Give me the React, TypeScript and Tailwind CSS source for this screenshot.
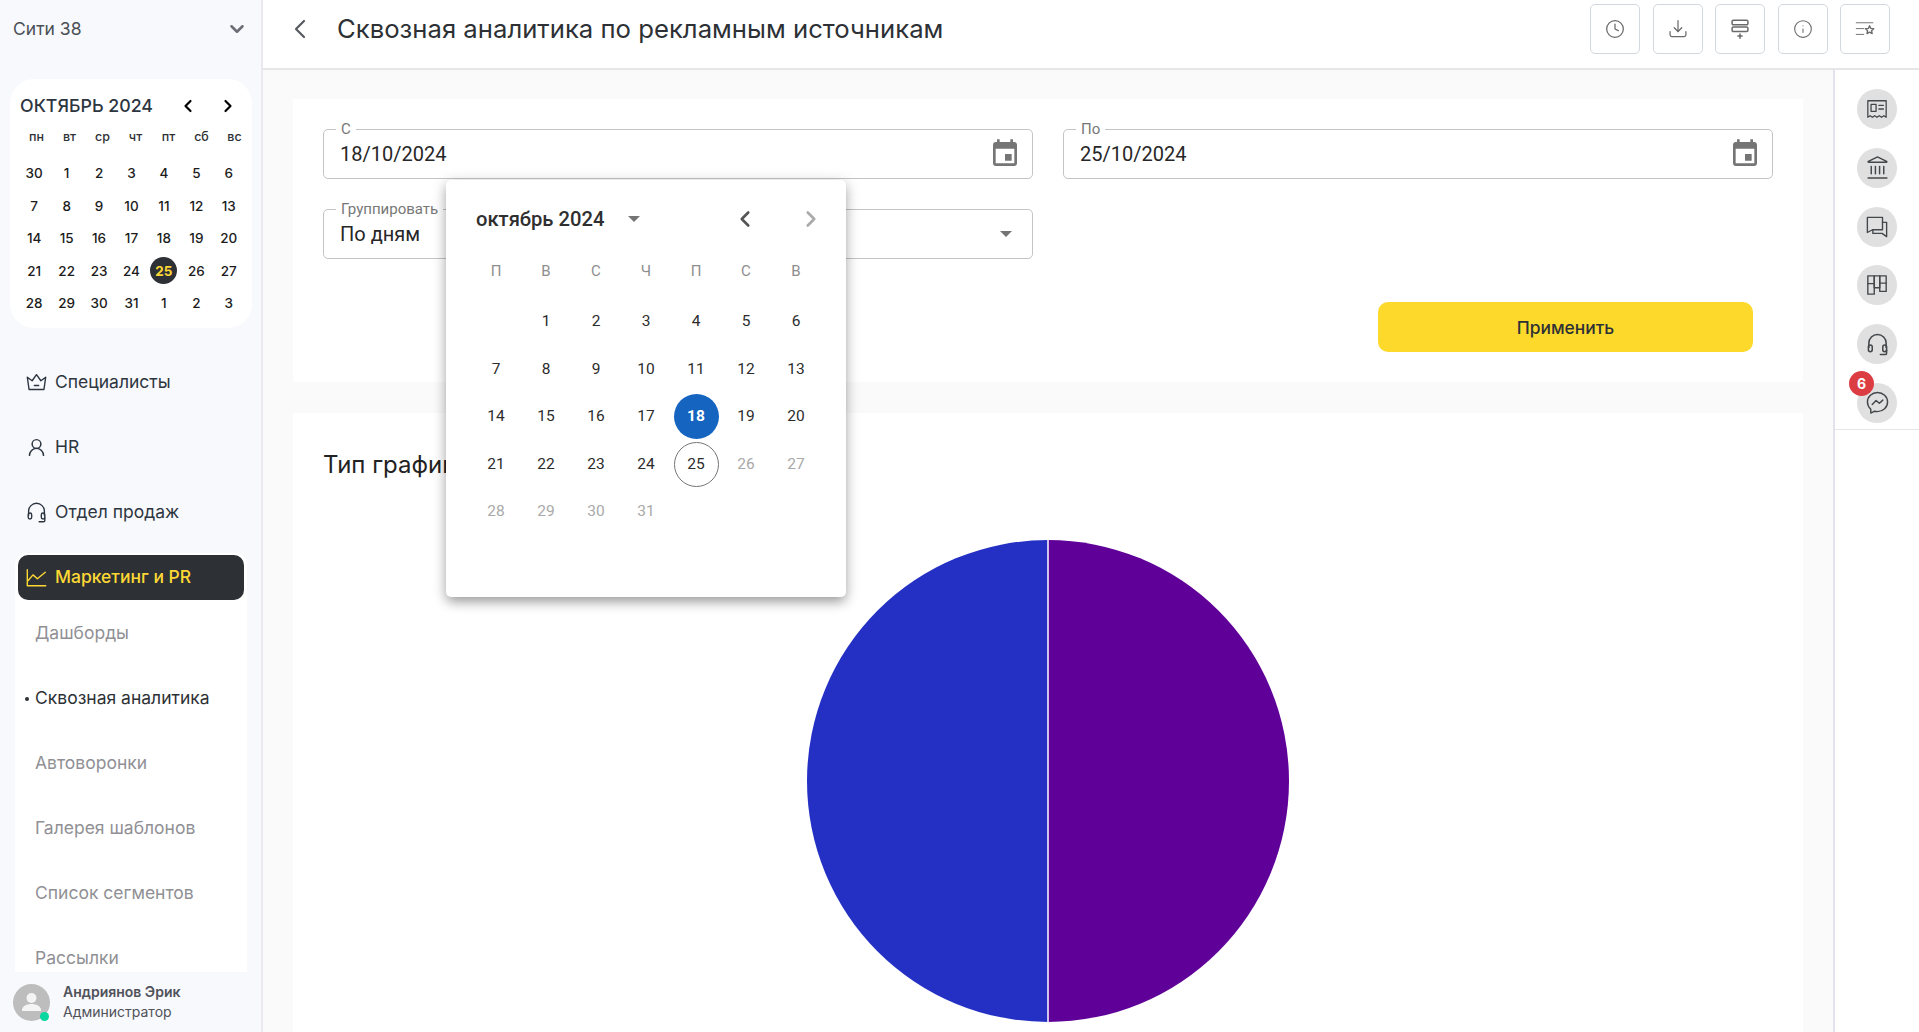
import React from "react";
import { ChevronDown, ChevronLeft, ChevronRight, Clock, Info, Landmark, UserRound } from "lucide-react";

const inter = "[font-family:Inter,sans-serif]";
const roboto = "[font-family:Roboto,sans-serif]";

type IP = { className?: string };
const S = ({ className, children, w = 1.5 }: IP & { children: React.ReactNode; w?: number }) => (
  <svg viewBox="0 0 24 24" fill="none" stroke="currentColor" strokeWidth={w} strokeLinecap="round" strokeLinejoin="round" className={className}>
    {children}
  </svg>
);
const Crown = (p: IP) => (
  <S {...p} w={1.6}><path d="M1.500 6 7 10 12 3l5 7 5.500-4L20.500 20h-17L1.500 6Z" /><path d="M9.500 15.500h5" /></S>
);
const Headset = (p: IP) => (
  <S {...p} w={1.6}>
    <path d="M3 15v-4.500a9 9 0 0 1 18 0V15" />
    <rect x="2.500" y="12.500" width="4" height="7" rx="2" />
    <rect x="17.500" y="12.500" width="4" height="7" rx="2" />
    <path d="M21.500 18v3a1.500 1.500 0 0 1-1.500 1.500h-5" />
  </S>
);
const ChartLine = (p: IP) => (
  <S {...p} w={1.6}><path d="M1.500 3v18.500h21" /><path d="M2 16l6-7 5 4.500L22 6" /></S>
);
const DownloadTray = (p: IP) => (
  <S {...p}><path d="M12 2v13" /><path d="m7.500 10.500 4.500 4.500 4.500-4.500" /><path d="M2.500 15v4a2 2 0 0 0 2 2h15a2 2 0 0 0 2-2v-4" /></S>
);
const StackPlus = (p: IP) => (
  <S {...p}>
    <rect x="2.500" y="1.500" width="19" height="5.500" rx="1.500" strokeWidth={1.8} />
    <rect x="2.500" y="9.500" width="19" height="5.500" rx="1.500" strokeWidth={1.8} />
    <path d="M12 18v5M9.500 20.500h5" strokeWidth={1.8} />
  </S>
);
const StarList = (p: IP) => (
  <S {...p} w={1.1}>
    <path d="M1.500 4.500h20M1.500 11.500h9M1.500 18.500h9" />
    <path d="m17.500 8 1.500 3.300 3.500.4-2.600 2.400.7 3.500-3.100-1.800-3.100 1.800.7-3.500-2.600-2.400 3.500-.4 1.500-3.300Z" strokeWidth={1.6} />
  </S>
);
const EventIcon = (p: IP) => (
  <svg viewBox="0 0 24 24" fill="currentColor" className={p.className}>
    <path d="M17 12h-5v5h5v-5zM16 1v2H8V1H6v2H5c-1.110 0-1.990.9-1.990 2L3 19c0 1.100.89 2 2 2h14c1.100 0 2-.9 2-2V5c0-1.100-.9-2-2-2h-1V1h-2zm3 18H5V8h14v11z" />
  </svg>
);
const Receipt = (p: IP) => (
  <S {...p} w={1.4}>
    <path d="M2 3h20v18l-2.500-1.700-2.500 1.700-2.500-1.700-2.500 1.700-2.500-1.700L7 21l-2.500-1.700L2 21V3Z" />
    <rect x="5.500" y="7" width="5.500" height="7.500" />
    <path d="M14 8h5M14 12h5" />
  </S>
);
const Chats = (p: IP) => (
  <S {...p} w={1.5}>
    <path d="M1.500 1.500H18v13.500H7l-5.500 3V1.500Z" />
    <path d="M18 7h4.500v15.500L17.500 19H7.500v-4" />
  </S>
);
const Kanban = (p: IP) => (
  <S {...p} w={1.5}>
    <rect x="2" y="2" width="7" height="20" />
    <rect x="9" y="2" width="6" height="13" />
    <rect x="15" y="2" width="7" height="17" />
    <path d="M2 10.500h7M15 10h7" />
  </S>
);
const Messenger = (p: IP) => (
  <S {...p} w={1.5}>
    <path d="M12 1.500c5.800 0 10.500 4.400 10.500 10s-4.700 10-10.500 10c-1 0-2.100-.1-3-.4L5 23v-4C2.900 17.100 1.500 14.500 1.500 11.500c0-5.600 4.700-10 10.500-10Z" />
    <path d="m6.500 14 4-4 3.500 2.800 3.500-3.300" />
  </S>
);

const miniDays = [
  ["30", "1", "2", "3", "4", "5", "6"],
  ["7", "8", "9", "10", "11", "12", "13"],
  ["14", "15", "16", "17", "18", "19", "20"],
  ["21", "22", "23", "24", "25", "26", "27"],
  ["28", "29", "30", "31", "1", "2", "3"],
];

function MiniCalendar() {
  return (
    <div className="ml-[10px] mr-[9px] mt-[21px] h-[249px] rounded-[24px] bg-white pl-[8px] pr-[3px] pt-[13px]">
      <div className="flex h-[28px] items-center pl-[2px]">
        <span className="w-[158px] text-[17.800px] font-medium text-[#2d3640]">ОКТЯБРЬ 2024</span>
        <ChevronLeft className="h-[20px] w-[20px] text-black" strokeWidth={2.6} />
        <ChevronRight className="ml-[20px] h-[20px] w-[20px] text-black" strokeWidth={2.6} />
      </div>
      <div className="mt-[7px] grid grid-cols-7 text-center text-[12.500px] font-medium text-[#2d3135]">
        {["пн", "вт", "ср", "чт", "пт", "сб", "вс"].map((d) => (
          <span key={d} className="pl-[4px] leading-[20px]">{d}</span>
        ))}
      </div>
      <div className="mr-[4px] mt-[10px] grid grid-cols-7 auto-rows-[32.500px] text-center text-[13.500px] font-medium text-[#1c1c1c]">
        {miniDays.flat().map((d, i) => (
          <span key={i} className="flex items-center justify-center">
            {i === 25 ? (
              <span className="flex h-[27px] w-[27px] items-center justify-center rounded-full bg-[#2d3135] font-bold text-[#fdd835]">25</span>
            ) : d}
          </span>
        ))}
      </div>
    </div>
  );
}

function NavItem({ icon, label }: { icon: React.ReactNode; label: string }) {
  return (
    <div className="flex h-[65px] items-center gap-[8px] pl-[26px] text-[17.500px] text-[#2d3640]">
      {icon}
      <span>{label}</span>
    </div>
  );
}

function Sidebar() {
  return (
    <aside className={`flex h-full w-[263px] shrink-0 flex-col border-r-2 border-[#e9e9ee] bg-[#f8f9fd] ${inter}`}>
      <div className="flex h-[58px] shrink-0 items-center justify-between pl-[13px] pr-[13px] text-[17.500px] text-[#4a4f55]">
        <span>Сити 38</span>
        <ChevronDown className="h-[22px] w-[22px] text-[#6b6f75]" strokeWidth={2.8} />
      </div>
      <MiniCalendar />
      <div className="mt-[22px] min-h-0 flex-1 overflow-hidden">
        <NavItem icon={<Crown className="h-[21px] w-[21px]" />} label="Специалисты" />
        <NavItem icon={<UserRound className="h-[21px] w-[21px]" strokeWidth={1.7} />} label="HR" />
        <NavItem icon={<Headset className="h-[21px] w-[21px]" />} label="Отдел продаж" />
        <div className="ml-[15px] mr-[14px] mt-[8px] h-[600px] rounded-t-[12px] bg-white pt-[2px]">
          <div className="mx-[3px] flex h-[45px] items-center gap-[8px] rounded-[10px] bg-[#2d3135] pl-[8px] text-[17.500px] font-medium text-[#fdd835]">
            <ChartLine className="h-[21px] w-[21px]" />
            <span>Маркетинг и PR</span>
          </div>
          <div className="pt-[1px]">
            {["Дашборды", "Сквозная аналитика", "Автоворонки", "Галерея шаблонов", "Список сегментов", "Рассылки"].map((t, i) => (
              <div key={t} className={`relative flex h-[65px] items-center pl-[20px] text-[17.500px] ${i === 1 ? "text-[#2d3135]" : "text-[#909095]"}`}>
                {i === 1 && <span className="absolute left-[10px] h-[4px] w-[4px] rounded-full bg-[#2d3135]" />}
                {t}
              </div>
            ))}
          </div>
        </div>
      </div>
      <div className="flex h-[60px] shrink-0 items-center gap-[13px] pl-[13px]">
        <div className="relative h-[37px] w-[37px] rounded-full bg-[#bdbdbd]">
          <svg viewBox="0 0 37 37" className="h-full w-full" fill="#f4f4f4">
            <circle cx="18.500" cy="14" r="5" />
            <path d="M9 26c0-4 5-6 9.500-6s9.500 2 9.500 6v1H9Z" />
          </svg>
          <span className="absolute bottom-[0px] right-[1px] h-[9px] w-[9px] rounded-full bg-[#06d6a0]" />
        </div>
        <div className="text-[14px] leading-[20px] text-[#50525a]">
          <div className="font-semibold">Андриянов Эрик</div>
          <div>Администратор</div>
        </div>
      </div>
    </aside>
  );
}

function HeaderBtn({ children }: { children: React.ReactNode }) {
  return <button className="flex h-[50px] w-[50px] items-center justify-center rounded-[5px] border border-[#d3d8de] text-[#6a6a6a]">{children}</button>;
}

function Header() {
  return (
    <header className={`flex h-[70px] shrink-0 items-center border-b-2 border-[#e6e6e9] bg-white pl-[21px] pr-[29px] ${inter}`}>
      <ChevronLeft className="mb-[10px] h-[32px] w-[32px] text-[#55595e]" strokeWidth={1.6} />
      <h1 className="mb-[10px] ml-[21px] flex-1 text-[25.700px] text-[#2d3135]">Сквозная аналитика по рекламным источникам</h1>
      <div className="mb-[10px] flex gap-[12.500px]">
        <HeaderBtn><Clock className="h-[20px] w-[20px]" strokeWidth={1.5} /></HeaderBtn>
        <HeaderBtn><DownloadTray className="h-[20px] w-[20px]" /></HeaderBtn>
        <HeaderBtn><StackPlus className="h-[20px] w-[20px]" /></HeaderBtn>
        <HeaderBtn><Info className="h-[20px] w-[20px]" strokeWidth={1.3} /></HeaderBtn>
        <HeaderBtn><StarList className="h-[20px] w-[20px]" /></HeaderBtn>
      </div>
    </header>
  );
}

function Field({ label, value, icon }: { label: string; value: string; icon: React.ReactNode }) {
  return (
    <div className={`relative flex h-[50px] items-center justify-between rounded-[5px] border border-[#c4c4c4] pl-[16px] pr-[11px] text-[20px] text-[#272727] ${roboto}`}>
      <span className="absolute -top-[11px] left-[12px] bg-white px-[5px] text-[15px] leading-[20px] text-[#777]">{label}</span>
      <span>{value}</span>
      {icon}
    </div>
  );
}

const calIcon = <EventIcon className="h-[32px] w-[32px] text-[#757575]" />;

const popRows: (string | null)[] = [
  null, "1", "2", "3", "4", "5", "6", "7", "8", "9", "10", "11", "12", "13", "14", "15", "16", "17", "18", "19", "20",
  "21", "22", "23", "24", "25", "26", "27", "28", "29", "30", "31",
];

function Popover() {
  return (
    <div className={`absolute left-[153px] top-[81px] z-10 h-[417px] w-[400px] rounded-[5px] bg-white shadow-[0_6px_12px_-2px_rgba(0,0,0,0.3),0_3px_14px_2px_rgba(0,0,0,0.15)] ${roboto}`}>
      <div className="flex h-[60px] items-center pl-[30px] pt-[18px] text-[#2f2f2f]">
        <span className="text-[20.200px] font-medium">октябрь 2024</span>
        <span className="ml-[24px] h-0 w-0 border-x-[6px] border-t-[6px] border-x-transparent border-t-[#757575]" />
        <ChevronLeft className="ml-[92px] h-[26px] w-[26px] text-[#555]" strokeWidth={2.4} />
        <ChevronRight className="ml-[40px] h-[26px] w-[26px] text-[#aaa]" strokeWidth={2.4} />
      </div>
      <div className="mx-[25px] mt-[19px] grid grid-cols-7 text-center text-[15px] leading-[24px] text-[#8e8e8e]">
        {["П", "В", "С", "Ч", "П", "С", "В"].map((d, i) => <span key={i}>{d}</span>)}
      </div>
      <div className="mx-[25px] mt-[15px] grid grid-cols-7 auto-rows-[47.500px] text-center text-[15.500px] text-[#2c2c2c]">
        {popRows.map((d, i) => {
          const n = Number(d);
          return (
            <span key={i} className="flex items-center justify-center">
              {n === 18 ? (
                <span className="flex h-[45px] w-[45px] items-center justify-center rounded-full bg-[#1565c0] font-bold text-white">18</span>
              ) : n === 25 ? (
                <span className="flex h-[45px] w-[45px] items-center justify-center rounded-full border border-[#757575]">25</span>
              ) : n > 25 ? (
                <span className="text-[#a9a9a9]">{d}</span>
              ) : d}
            </span>
          );
        })}
      </div>
    </div>
  );
}

function Filters() {
  return (
    <section className="relative bg-white p-[30px]">
      <div className="grid grid-cols-2 gap-x-[30px] gap-y-[30px]">
        <Field label="С" value="18/10/2024" icon={calIcon} />
        <Field label="По" value="25/10/2024" icon={calIcon} />
        <Field label="Группировать" value="По дням" icon={<span className="mr-[9px] h-0 w-0 border-x-[6px] border-t-[6px] border-x-transparent border-t-[#757575]" />} />
      </div>
      <div className="mt-[43px] flex justify-end pr-[20px]">
        <button className={`flex h-[50px] w-[375px] items-center justify-center rounded-[10px] bg-[#fdd92b] pt-[2px] text-[17.400px] font-medium text-[#2d3135] ${inter}`}>Применить</button>
      </div>
      <Popover />
    </section>
  );
}

function ChartCard() {
  return (
    <section className="mt-[31px] flex-1 bg-white pl-[30px] pt-[36px]">
      <h2 className={`whitespace-nowrap text-[24px] leading-[32px] text-[#222] ${inter}`}>Тип графика</h2>
      <div className="ml-[484px] mt-[59px] w-[482px]">
        <svg viewBox="0 0 482 482" className="h-[482px] w-[482px]">
          <path d="M241 0A241 241 0 0 1 241 482Z" fill="#5f0099" />
          <path d="M241 0A241 241 0 0 0 241 482Z" fill="#2430c4" />
          <path d="M241 0V482" stroke="#fff" strokeWidth="1.500" />
        </svg>
      </div>
    </section>
  );
}

function RailIcon({ children, badge }: { children: React.ReactNode; badge?: string }) {
  return (
    <div className="relative flex h-[40px] w-[40px] items-center justify-center rounded-full bg-[#e0e0e0] text-[#44474a]">
      {children}
      {badge && (
        <span className={`absolute -left-[8px] -top-[12px] flex h-[25px] w-[25px] items-center justify-center rounded-full bg-[#dc3d43] text-[14px] font-bold text-white ${inter}`}>{badge}</span>
      )}
    </div>
  );
}

function Rail() {
  return (
    <aside className="h-full w-[86px] shrink-0 border-l-2 border-[#e2e2ec] bg-white">
      <div className="flex flex-col items-center gap-[18.800px] border-b border-[#e6e6ea] pb-[6px] pt-[19px]">
        <RailIcon><Receipt className="h-[22px] w-[22px]" /></RailIcon>
        <RailIcon><Landmark className="h-[25px] w-[25px]" strokeWidth={1.4} /></RailIcon>
        <RailIcon><Chats className="h-[22px] w-[22px]" /></RailIcon>
        <RailIcon><Kanban className="h-[22px] w-[22px]" /></RailIcon>
        <RailIcon><Headset className="h-[23px] w-[23px]" /></RailIcon>
        <RailIcon badge="6"><Messenger className="h-[23px] w-[23px]" /></RailIcon>
      </div>
    </aside>
  );
}

export default function App() {
  return (
    <div className="flex h-screen w-full overflow-hidden bg-white">
      <Sidebar />
      <div className="flex min-w-0 flex-1 flex-col">
        <Header />
        <div className="flex min-h-0 flex-1">
          <main className="flex min-w-0 flex-1 flex-col overflow-hidden bg-[#fafafa] px-[30px] pt-[29px]">
            <Filters />
            <ChartCard />
          </main>
          <Rail />
        </div>
      </div>
    </div>
  );
}
